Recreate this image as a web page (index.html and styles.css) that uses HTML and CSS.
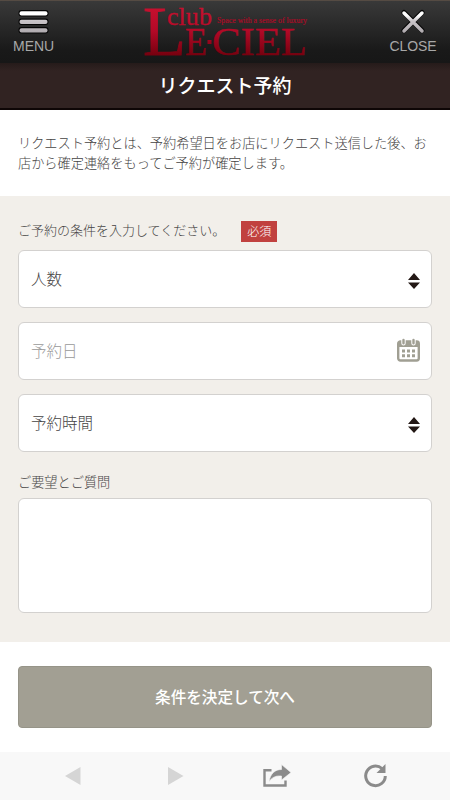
FILE: index.html
```html
<!DOCTYPE html>
<html lang="ja">
<head>
<meta charset="utf-8">
<meta name="viewport" content="width=device-width, initial-scale=1">
<title>リクエスト予約</title>
<link rel="stylesheet" href="styles.css">
</head>
<body>
<header class="header">
  <a class="nav nav-menu">
    <svg width="34" height="26" viewBox="0 0 34 26">
      <defs>
        <linearGradient id="metal" x1="0" y1="0" x2="0" y2="26" gradientUnits="userSpaceOnUse">
          <stop offset="0" stop-color="#fff"/><stop offset=".25" stop-color="#fff"/><stop offset=".45" stop-color="#c9c4c8"/><stop offset="1" stop-color="#aaa5a9"/>
        </linearGradient>
      </defs>
      <g fill="#050505"><rect x="1.500" y="1" width="30" height="6.5" rx="3"/><rect x="1.500" y="9.500" width="30" height="6.500" rx="3"/><rect x="1.500" y="18" width="30" height="6.500" rx="3"/></g>
      <g fill="url(#metal)"><rect x="2.500" y="2.300" width="28" height="4.200" rx="2"/><rect x="2.500" y="10.800" width="28" height="4.200" rx="2"/><rect x="2.500" y="19.300" width="28" height="4.200" rx="2"/></g>
    </svg>
    <span>MENU</span>
  </a>
  <svg class="logo" width="166" height="56" viewBox="0 0 166 56" role="img">
    <defs>
      <linearGradient id="red" x1="0" y1="4" x2="0" y2="54" gradientUnits="userSpaceOnUse">
        <stop offset="0" stop-color="#c9102f"/><stop offset=".5" stop-color="#b30927"/><stop offset="1" stop-color="#75000e"/>
      </linearGradient>
    </defs>
    <g class="serif" fill="url(#red)" stroke="url(#red)">
      <text x="0" y="53" font-size="70" textLength="43" lengthAdjust="spacingAndGlyphs" stroke-width=".8">L</text>
      <text x="24" y="22.500" font-size="26" textLength="45" lengthAdjust="spacingAndGlyphs" stroke-width=".3">club</text>
      <text x="42" y="53" font-size="39" textLength="22" lengthAdjust="spacingAndGlyphs" stroke-width=".5">E</text>
      <rect x="64.500" y="38" width="4" height="4" stroke="none"/>
      <text x="69" y="53" font-size="39" textLength="95" lengthAdjust="spacingAndGlyphs" stroke-width=".4">CIEL</text>
    </g>
    <text class="serif" x="74" y="20.500" font-size="8" fill="#a80c27" stroke="#a80c27" stroke-width=".2" textLength="90" lengthAdjust="spacingAndGlyphs">Space with a sense of luxury</text>
  </svg>
  <a class="nav nav-close">
    <svg width="34" height="26" viewBox="0 0 34 26" stroke-linecap="round" fill="none">
      <path d="M8 3.500 26 21.500M26 3.500 8 21.500" stroke="#050505" stroke-width="5"/>
      <path d="M8 4 26 22M26 4 8 22" stroke="url(#metal)" stroke-width="3.500"/>
    </svg>
    <span>CLOSE</span>
  </a>
</header>
<h1 class="title">リクエスト予約</h1>
<main>
  <p class="intro">リクエスト予約とは、予約希望日をお店にリクエスト送信した後、お店から確定連絡をもってご予約が確定します。</p>
  <section class="form">
    <div class="label-row"><span>ご予約の条件を入力してください。</span><span class="badge">必須</span></div>
    <div class="field">
      <span>人数</span>
      <svg width="12" height="16" viewBox="0 0 12 16" fill="#231815"><path d="M6 0 12 7H0zM6 16 0 9.500H12z"/></svg>
    </div>
    <div class="field placeholder">
      <span>予約日</span>
      <svg class="calendar" width="23" height="24" viewBox="0 0 23 24">
        <rect x="1.200" y="3.500" width="20.600" height="19" rx="2.200" fill="#fff" stroke="#a09f93" stroke-width="2.400"/>
        <path d="M1 4h21v5H1z" fill="#a09f93"/>
        <path d="M6.500 2v3.300M16.500 2v3.300" stroke="#fff" stroke-width="4.400" stroke-linecap="round"/>
        <path d="M6.500 2v3.200M16.500 2v3.200" stroke="#a09f93" stroke-width="2.400" stroke-linecap="round"/>
        <path d="M5 11.500h3v3H5zM10 11.500h3v3h-3zM15 11.500h3v3h-3zM5 16.200h3v3H5zM10 16.200h3v3h-3zM15 16.200h3v3h-3z" fill="#a09f93"/>
      </svg>
    </div>
    <div class="field">
      <span>予約時間</span>
      <svg width="12" height="16" viewBox="0 0 12 16" fill="#231815"><path d="M6 0 12 7H0zM6 16 0 9.500H12z"/></svg>
    </div>
    <label class="question" for="question">ご要望とご質問</label>
    <textarea id="question" class="message"></textarea>
  </section>
  <div class="actions"><button class="submit" type="button">条件を決定して次へ</button></div>
</main>
<nav class="toolbar">
  <svg width="16" height="18" viewBox="0 0 16 18"><path d="M0 9 15.500 0V18z" fill="#d5d5d5"/></svg>
  <svg width="16" height="18" viewBox="0 0 16 18"><path d="M15.500 9 0 0V18z" fill="#d5d5d5"/></svg>
  <svg width="28" height="24" viewBox="0 0 28 24">
    <path d="M8.500 6.300H1.500V21.500H22.500V16.500" fill="none" stroke="#8b8b8b" stroke-width="2.400"/>
    <path d="M6 17.500C7.500 9.500 12 5.500 18.500 5.500V.5L28 8.500 18.500 16V12C12.500 11.500 9 13.500 6 17.500Z" fill="#8b8b8b" stroke="#f8f8f8" stroke-width=".6"/>
  </svg>
  <svg width="24" height="25" viewBox="0 0 24 25">
    <path d="M18 5.500A9.800 9.800 0 1 0 21.300 13" fill="none" stroke="#8b8b8b" stroke-width="3"/>
    <path d="M21.500 1V10H12.500z" fill="#8b8b8b"/>
  </svg>
</nav>
</body>
</html>
```
FILE: styles.css
```css
* { box-sizing: border-box; }
body {
  margin: 0;
  width: 450px;
  height: 800px;
  overflow: hidden;
  background: #fff;
  color: #454343;
  font-family: "Noto Sans CJK JP", sans-serif;
  font-weight: 300;
}
svg { display: block; flex: none; }
.header {
  display: grid;
  grid-template-columns: 68px 1fr 74px;
  height: 63px;
  border-top: 1px solid #554b43;
  background: linear-gradient(#393939, #191919 80%, #171717);
}
.nav {
  display: flex;
  flex-direction: column;
  align-items: center;
  padding-top: 8px;
  color: #a8a8a8;
  font: 14px/18px "Liberation Sans", sans-serif;
}
.nav span { margin-top: 2px; letter-spacing: -.1px; }
.nav-menu { padding-right: 1px; }
.nav-close svg { margin-right: 1px; }
.logo { margin: 1px 0 0 75px; overflow: visible; }
.serif { font-family: "Liberation Serif", serif; }
.title {
  margin: 0;
  height: 47px;
  border-bottom: 2px solid #0e0606;
  background: linear-gradient(#251b1a, #312322 8px);
  color: #fff;
  font-size: 19px;
  font-weight: 500;
  line-height: 44px;
  text-align: center;
}
.intro {
  height: 86px;
  margin: 0 -4px 0 0;
  padding: 23px 18px 0;
  font-size: 13.2px;
  line-height: 19.5px;
}
.form {
  height: 446px;
  padding: 24px 18px 0;
  background: #f2efea;
}
.label-row {
  display: flex;
  align-items: flex-start;
  height: 30px;
  font-size: 13px;
  line-height: 20px;
}
.badge {
  width: 36px;
  height: 21px;
  margin: 1px 0 0 16px;
  background: #c1413f;
  color: #fff;
  font-size: 12px;
  line-height: 20px;
  text-align: center;
}
.field {
  display: flex;
  align-items: center;
  justify-content: space-between;
  height: 58px;
  margin-bottom: 14px;
  padding: 0 11px 0 12px;
  border: 1px solid #d3d1cf;
  border-radius: 6px;
  background: #fff;
  font-size: 15.5px;
}
.field span { padding-bottom: 2px; }
.field svg { margin-top: 4px; }
.field .calendar { margin-top: -2px; }
.placeholder { color: #999; }
.question {
  display: block;
  height: 32px;
  padding-top: 6px;
  font-size: 13.2px;
  line-height: 20px;
}
.message {
  display: block;
  width: 414px;
  height: 115px;
  border: 1px solid #d3d1cf;
  border-radius: 6px;
  background: #fff;
  resize: none;
}
.actions { height: 110px; padding: 24px 18px 0; }
.submit {
  display: block;
  width: 100%;
  height: 62px;
  padding: 0 0 2px;
  border: 1px solid #969488;
  border-radius: 4px;
  background: #a29f93;
  color: #fff;
  font: 500 15.6px "Noto Sans CJK JP", sans-serif;
}
.toolbar {
  display: grid;
  grid-template-columns: 124px 82px 120px 78px;
  align-items: center;
  justify-items: center;
  height: 48px;
  padding: 0 0 1px 11px;
  background: #f8f8f8;
}
```
